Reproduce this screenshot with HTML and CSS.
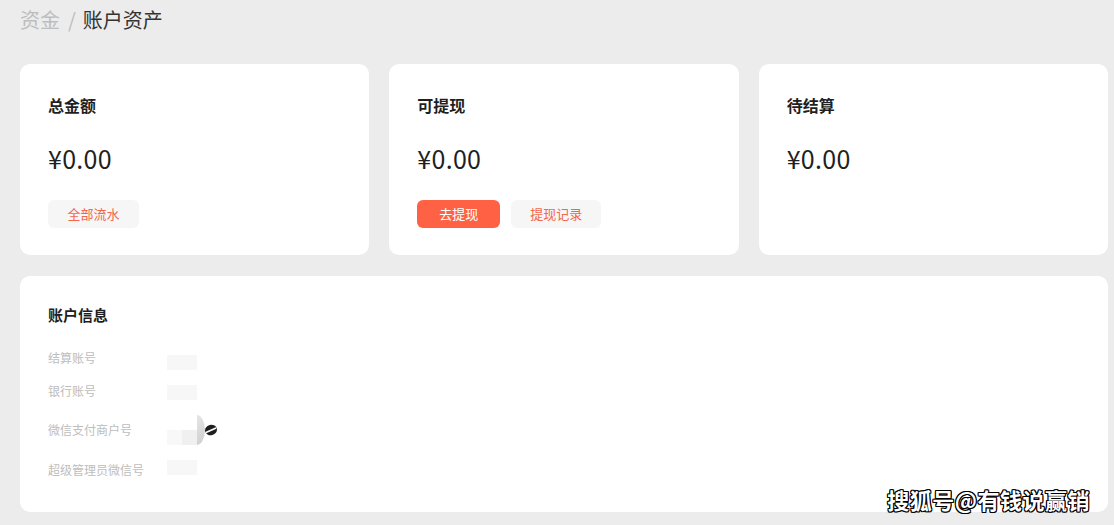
FILE: index.html
```html
<!DOCTYPE html>
<html lang="zh-CN">
<head>
<meta charset="utf-8">
<title>账户资产</title>
<link rel="stylesheet" href="styles.css">
</head>
<body>
<div class="page">
  <div class="crumb"><span class="crumb-prev">资金</span><span class="crumb-sep">/</span><span class="crumb-cur">账户资产</span></div>

  <div class="cards">
    <div class="card">
      <div class="card-title">总金额</div>
      <div class="amount">¥0.00</div>
      <div class="actions">
        <span class="btn btn-ghost btn-w91">全部流水</span>
      </div>
    </div>
    <div class="card">
      <div class="card-title">可提现</div>
      <div class="amount">¥0.00</div>
      <div class="actions">
        <span class="btn btn-primary btn-w83">去提现</span>
        <span class="btn btn-ghost btn-w90">提现记录</span>
      </div>
    </div>
    <div class="card">
      <div class="card-title">待结算</div>
      <div class="amount">¥0.00</div>
    </div>
  </div>

  <div class="info">
    <div class="info-title">账户信息</div>
    <div class="row row-1">
      <div class="label">结算账号</div>
      <div class="ph"></div>
    </div>
    <div class="row row-2">
      <div class="label">银行账号</div>
      <div class="ph"></div>
    </div>
    <div class="row row-3">
      <div class="label">微信支付商户号</div>
      <div class="val">
        <div class="ph ph-split"><span class="ph-half"></span><span class="ph-half ph-half-dark"></span></div>
        <span class="half-disc"></span>
        <svg class="blob" width="12" height="12" viewBox="0 0 12 12"><ellipse cx="6" cy="6" rx="6" ry="5.2" transform="rotate(-15 6 6)" fill="#1e1e1e"/><path d="M1.5 8.2 L10.5 4.2" stroke="#fff" stroke-width="1.6" stroke-linecap="round"/></svg>
      </div>
    </div>
    <div class="row row-4">
      <div class="label">超级管理员微信号</div>
      <div class="ph"></div>
    </div>
  </div>

  <div class="watermark">搜狐号@有钱说赢销</div>
</div>
</body>
</html>
```

FILE: styles.css
```css
* { box-sizing: border-box; }
html, body { margin: 0; padding: 0; }
body {
  background: #ececec;
  font-family: "Noto Sans CJK SC", "Noto Sans", sans-serif;
  color: #222;
}
.page {
  position: relative;
  width: 1114px;
  height: 525px;
  padding: 0 6px 0 20px;
  overflow: hidden;
}
.crumb {
  height: 40px;
  line-height: 40px;
  font-size: 20px;
  margin-bottom: 24px;
}
.crumb-prev { color: #bdbdbd; }
.crumb-sep { color: #bdbdbd; margin: 0 7px 0 8px; }
.crumb-cur { color: #333; }

.cards {
  display: grid;
  grid-template-columns: repeat(3, 1fr);
  gap: 20px;
  margin-bottom: 21px;
}
.card {
  background: #fff;
  border-radius: 10px;
  height: 191px;
  padding: 30px 28px 0 28px;
}
.card-title {
  font-size: 16px;
  font-weight: 700;
  line-height: 22px;
  color: #1f1f1f;
}
.amount {
  margin-top: 26px;
  font-size: 25px;
  line-height: 32px;
  color: #1f1f1f;
  letter-spacing: 0.3px;
}
.actions {
  margin-top: 26px;
  display: flex;
  gap: 11px;
}
.btn {
  height: 28px;
  line-height: 28px;
  border-radius: 6px;
  font-size: 13px;
  text-align: center;
  display: inline-block;
}
.btn-ghost { background: #f6f6f6; color: #f2664b; }
.btn-primary { background: #ff6144; color: #fff; }
.btn-w91 { width: 91px; }
.btn-w83 { width: 83px; }
.btn-w90 { width: 90px; }

.info {
  background: #fff;
  border-radius: 10px;
  height: 236px;
  padding: 28px 28px 0 28px;
}
.info-title {
  font-size: 15px;
  font-weight: 700;
  line-height: 21px;
  color: #1f1f1f;
  margin-bottom: 24px;
}
.row {
  display: flex;
  align-items: flex-start;
}
.label {
  width: 119px;
  font-size: 12px;
  line-height: 17px;
  color: #bdbdbd;
  flex: none;
}
.ph {
  width: 30px;
  height: 15px;
  background: #f7f7f7;
}
.row-1 { height: 33px; }
.row-1 .ph { margin-top: 6px; }
.row-2 { height: 33px; }
.row-2 .ph { margin-top: 3px; }
.row-3 { height: 45px; }
.row-3 .label { margin-top: 6px; }
.row-4 .label { margin-top: 1px; }

.val { display: flex; align-items: flex-start; }
.ph-split { display: flex; margin-top: 15px; background: none; }
.ph-half { width: 15px; height: 15px; background: #f8f8f8; }
.ph-half-dark { background: #f0f0f0; }
.half-disc {
  width: 8px;
  height: 30px;
  border-radius: 0 8px 8px 0 / 0 15px 15px 0;
  background: linear-gradient(135deg, #e6e6e6, #cdcdcd);
}
.blob { margin-top: 9px; }

.watermark {
  position: absolute;
  right: 24px;
  top: 484px;
  font-size: 22px;
  font-weight: 700;
  line-height: 30px;
  color: #fff;
  letter-spacing: 0.5px;
  text-shadow: -1px -1px 0 #000, 1px -1px 0 #000, -1px 1px 0 #000, 1px 1px 0 #000, 0 1px 0 #000, 0 -1px 0 #000, 1px 0 0 #000, -1px 0 0 #000;
}
```
